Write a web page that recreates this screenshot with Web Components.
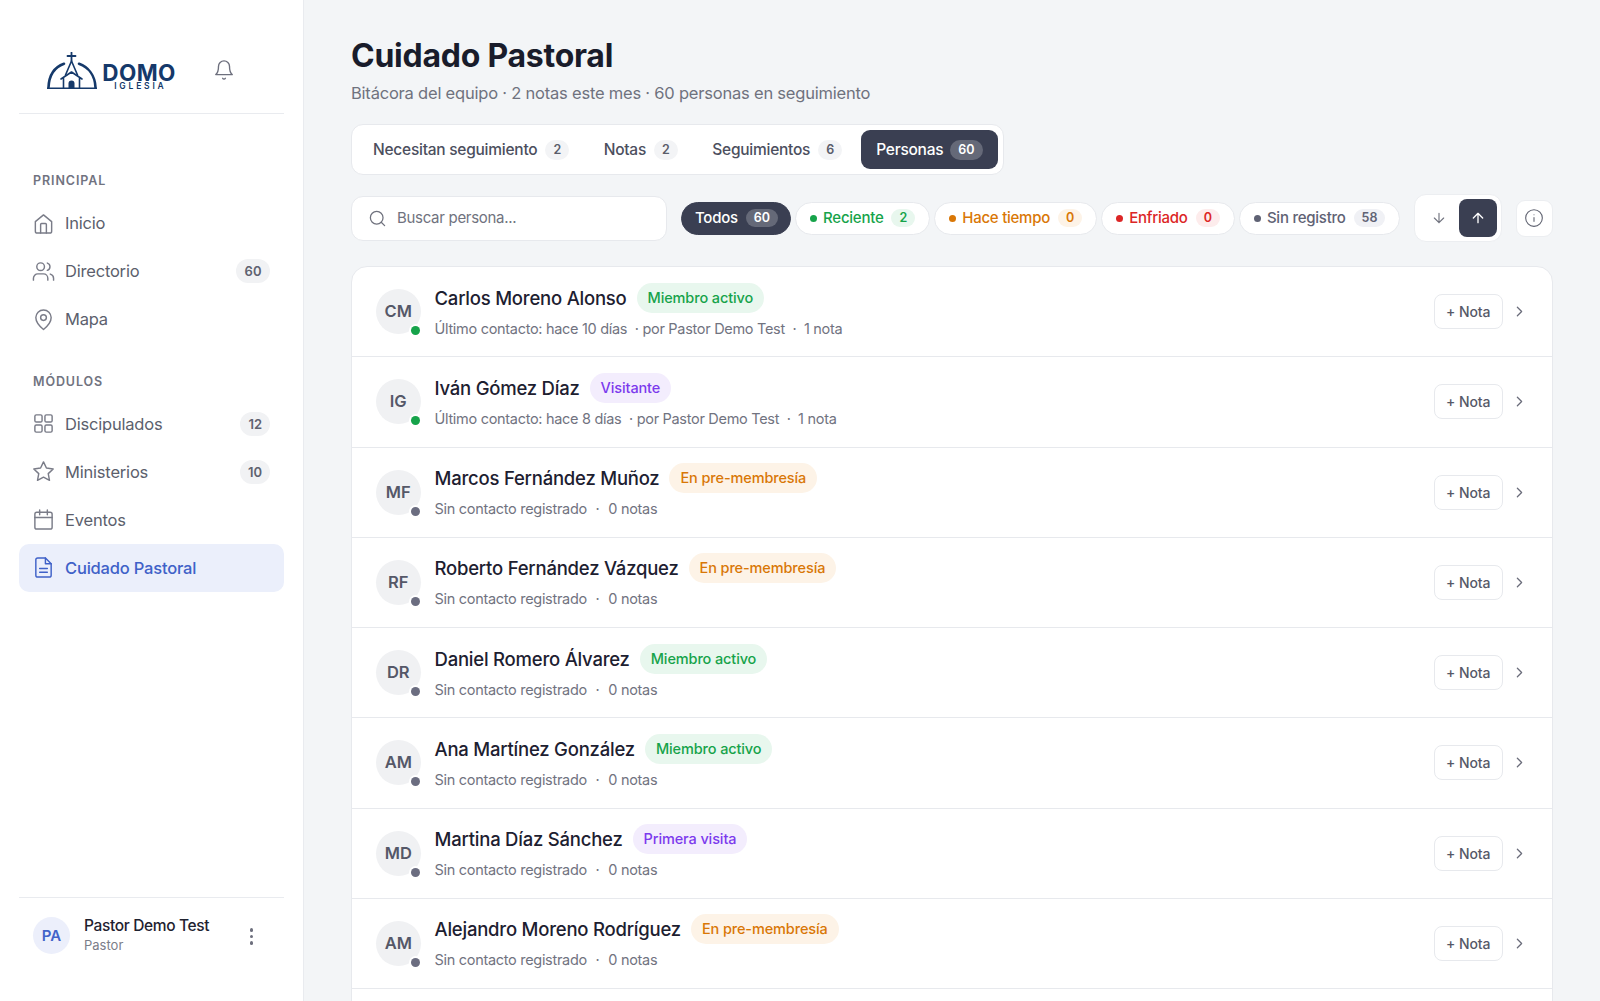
<!DOCTYPE html>
<html lang="es">
<head>
<meta charset="utf-8">
<title>Cuidado Pastoral</title>
<style>
  html, body { margin: 0; height: 100%; overflow: hidden; }
  body { font-family: Inter, "Liberation Sans", sans-serif; background: #f3f5f7; color: #1a1d2b; }
</style>
</head>
<body>
<app-shell>
  <side-bar slot="side">
    <nav-section title="PRINCIPAL">
      <nav-item icon="home">Inicio</nav-item>
      <nav-item icon="users" count="60">Directorio</nav-item>
      <nav-item icon="pin">Mapa</nav-item>
    </nav-section>
    <nav-section title="MÓDULOS">
      <nav-item icon="grid" count="12">Discipulados</nav-item>
      <nav-item icon="star" count="10">Ministerios</nav-item>
      <nav-item icon="calendar">Eventos</nav-item>
      <nav-item icon="file" active>Cuidado Pastoral</nav-item>
    </nav-section>
  </side-bar>

  <page-head>Bitácora del equipo · 2 notas este mes · 60 personas en seguimiento</page-head>

  <tab-bar>
    <tab-item count="2">Necesitan seguimiento</tab-item>
    <tab-item count="2">Notas</tab-item>
    <tab-item count="6">Seguimientos</tab-item>
    <tab-item count="60" active>Personas</tab-item>
  </tab-bar>

  <tool-bar>
    <search-box></search-box>
    <filter-pill count="60" active>Todos</filter-pill>
    <filter-pill count="2" tone="green">Reciente</filter-pill>
    <filter-pill count="0" tone="orange">Hace tiempo</filter-pill>
    <filter-pill count="0" tone="red">Enfriado</filter-pill>
    <filter-pill count="58" tone="gray">Sin registro</filter-pill>
    <sort-toggle></sort-toggle>
    <info-button></info-button>
  </tool-bar>

  <person-list>
    <person-row initials="CM" name="Carlos Moreno Alonso" badge="Miembro activo" tone="green" recent by="Último contacto: hace 10 días" notes="1 nota"></person-row>
    <person-row initials="IG" name="Iván Gómez Díaz" badge="Visitante" tone="purple" recent by="Último contacto: hace 8 días" notes="1 nota"></person-row>
    <person-row initials="MF" name="Marcos Fernández Muñoz" badge="En pre-membresía" tone="orange"></person-row>
    <person-row initials="RF" name="Roberto Fernández Vázquez" badge="En pre-membresía" tone="orange"></person-row>
    <person-row initials="DR" name="Daniel Romero Álvarez" badge="Miembro activo" tone="green"></person-row>
    <person-row initials="AM" name="Ana Martínez González" badge="Miembro activo" tone="green"></person-row>
    <person-row initials="MD" name="Martina Díaz Sánchez" badge="Primera visita" tone="purple"></person-row>
    <person-row initials="AM" name="Alejandro Moreno Rodríguez" badge="En pre-membresía" tone="orange"></person-row>
  </person-list>
</app-shell>

<script>
const ICONS = {
  home: '<path d="M3.5 10l8.5-7 8.5 7v10a2 2 0 0 1-2 2h-13a2 2 0 0 1-2-2z"/><path d="M9 22v-9a1 1 0 0 1 1-1h4a1 1 0 0 1 1 1v9"/>',
  users: '<circle cx="9" cy="7" r="4"/><path d="M1.5 21v-2a4.5 4.5 0 0 1 4.5-4.5h6a4.5 4.5 0 0 1 4.5 4.5v2"/><path d="M16 3.2a4 4 0 0 1 0 7.6"/><path d="M22.5 21v-2a4.5 4.5 0 0 0-3.4-4.3"/>',
  pin: '<path d="M20 10c0 6-8 12.5-8 12.5S4 16 4 10a8 8 0 0 1 16 0z"/><circle cx="12" cy="10" r="3"/>',
  grid: '<rect x="3" y="3" width="7.5" height="7.5" rx="1.5"/><rect x="13.5" y="3" width="7.5" height="7.5" rx="1.5"/><rect x="3" y="13.5" width="7.5" height="7.5" rx="1.5"/><rect x="13.5" y="13.5" width="7.5" height="7.5" rx="1.5"/>',
  star: '<path d="M12 2l3.05 6.4 7.05.95-5.15 4.85 1.3 7L12 17.85 5.75 21.2l1.3-7L1.9 9.35l7.05-.95z"/>',
  calendar: '<rect x="3" y="4.5" width="18" height="17.5" rx="2"/><path d="M8 2v5M16 2v5M3 10h18"/>',
  file: '<path d="M14 2H6a2 2 0 0 0-2 2v16a2 2 0 0 0 2 2h12a2 2 0 0 0 2-2V8z"/><path d="M14 2v6h6M8 13h8M8 17h8"/>',
  bell: '<path d="M6 8a6 6 0 0 1 12 0c0 7 3 9 3 9H3s3-2 3-9"/><path d="M10.5 21a1.7 1.7 0 0 0 3 0"/>',
  search: '<circle cx="11" cy="11" r="8"/><path d="M21 21l-4.3-4.3"/>',
  down: '<path d="M12 5v14M19 12l-7 7-7-7"/>',
  up: '<path d="M12 19V5M5 12l7-7 7 7"/>',
  info: '<circle cx="12" cy="12" r="10"/><path d="M12 16v-4.5M12 8h.01"/>',
  chevron: '<path d="M9 18l6-6-6-6"/>'
};

function svgIcon(name, size, width = 1.75) {
  return `<svg width="${size}" height="${size}" viewBox="0 0 24 24" fill="none" stroke="currentColor" stroke-width="${width}" stroke-linecap="round" stroke-linejoin="round">${ICONS[name]}</svg>`;
}

// small helper so each element only states its markup and styles
function define(tag, css, html) {
  customElements.define(tag, class extends HTMLElement {
    connectedCallback() {
      if (this.shadowRoot) return;
      this.attachShadow({ mode: 'open' });
      this.shadowRoot.innerHTML = `<style>${css}</style>${typeof html === 'function' ? html(this) : html}`;
    }
  });
}

define('app-shell', `
  :host { display: grid; grid-template-columns: 304px 1fr; height: 1001px; overflow: hidden; }
  main { padding: 36px 47px 0 47px; min-width: 0; overflow: hidden; }
`, `<slot name="side"></slot><main><slot></slot></main>`);

define('side-bar', `
  :host { display: flex; flex-direction: column; height: 1001px; box-sizing: border-box; padding: 0 19px; background: #fff; border-right: 1px solid #e9ebef; }
  header { height: 114px; flex: none; box-sizing: border-box; border-bottom: 1px solid #e9ebef; display: flex; align-items: flex-start; padding: 52px 0 0 28px; }
  .word { display: flex; flex-direction: column; align-items: center; margin: 12px 0 0 5px; color: #15396a; width: 74px; }
  .domo { font: 700 22.5px/17px Inter, sans-serif; letter-spacing: .4px; }
  .sub { font: 600 8.5px/9px Inter, sans-serif; letter-spacing: 2.8px; margin-top: 1px; margin-right: -2.8px; }
  .bell { margin: 7px 0 0 37px; color: #6d6f7d; line-height: 0; }
  .nav { flex: 1; }
  footer { height: 104px; flex: none; box-sizing: border-box; border-top: 1px solid #e9ebef; display: flex; align-items: flex-start; padding: 19px 30px 0 14px; }
  .av { width: 37px; height: 37px; border-radius: 50%; background: #eceffb; color: #4263c9; font: 600 15px/37px Inter, sans-serif; text-align: center; flex: none; }
  .who { margin-left: 14px; flex: 1; }
  .nm { font: 500 15.5px/20px Inter, sans-serif; color: #1f2230; letter-spacing: -.35px; margin-top: -1px; }
  .rl { font: 400 13px/18px Inter, sans-serif; color: #7b7d89; }
  .dots { display: flex; flex-direction: column; gap: 3px; margin: 11px 0 0 0; padding-right: 1px; }
  .dots i { width: 3.5px; height: 3.5px; border-radius: 50%; background: #6d6f7d; }
`, `
  <header>
    <svg width="50" height="38" viewBox="47 52 50 38" fill="none" stroke="#15396a" stroke-width="2" stroke-linecap="round" stroke-linejoin="round">
      <path d="M48.5 87.5C49 75 55 67 64 63.8M79 63.8C88 67 95 75 95.5 87.5" stroke-width="2.6"/>
      <path d="M47 88.2H97" stroke-width="1.6"/>
      <path d="M71.5 52.5V61M67.5 56H75.5" stroke-width="1.8"/>
      <path d="M71.5 61L65.5 75M71.5 61L77.5 75" stroke-width="1.6"/>
      <path d="M61 79L71.5 72L82 79M63.5 78.5V88M79.5 78.5V88" stroke-width="1.6"/>
      <path d="M68.5 88.5V83.5a3 3 0 0 1 6 0v5z" fill="#15396a" stroke="none"/>
    </svg>
    <div class="word"><span class="domo">DOMO</span><span class="sub">IGLESIA</span></div>
    <div class="bell">${svgIcon('bell', 22, 1.5)}</div>
  </header>
  <div class="nav"><slot></slot></div>
  <footer>
    <div class="av">PA</div>
    <div class="who"><div class="nm">Pastor Demo Test</div><div class="rl">Pastor</div></div>
    <div class="dots"><i></i><i></i><i></i></div>
  </footer>`);

define('nav-section', `
  :host { display: block; padding-top: 57px; }
  :host(:last-child) { padding-top: 29px; }
  .t { font: 600 12.5px/20px Inter, sans-serif; letter-spacing: .9px; color: #71737f; padding-left: 14px; margin-bottom: 8px; }
  :host(:last-child) .t { margin-bottom: 7.5px; }
`, el => `<div class="t">${el.getAttribute('title')}</div><slot></slot>`);

define('nav-item', `
  :host { display: flex; align-items: center; height: 48px; box-sizing: border-box; padding: 0 14px; border-radius: 10px; color: #5c5f6d; font: 400 16.5px/24px Inter, sans-serif; letter-spacing: -.2px; }
  :host([active]) { background: #ebeffb; color: #3f61c8; font-weight: 500; }
  .ic { width: 20px; height: 24px; display: flex; align-items: center; justify-content: center; margin-right: 12px; color: #7a7c88; }
  .ic svg { flex: none; }
  :host([active]) .ic { color: #3f61c8; }
  .lbl { flex: 1; }
  .n { font: 600 13px/24px Inter, sans-serif; color: #5f6270; background: #f1f2f4; border-radius: 12px; padding: 0 8.5px; text-align: center; letter-spacing: 0; }
  .n.narrow { padding: 0 8px; }
`, el => {
  const n = el.getAttribute('count');
  return `<span class="ic">${svgIcon(el.getAttribute('icon'), 23, 1.5)}</span><span class="lbl"><slot></slot></span>${n ? `<span class="n${n[0] === '1' ? ' narrow' : ''}">${n}</span>` : ''}`;
});

define('page-head', `
  :host { display: block; }
  h1 { margin: 0; font: 700 32px/40px Inter, sans-serif; letter-spacing: -.25px; color: #191c2b; }
  p { margin: 5px 0 0; font: 400 16.5px/24px Inter, sans-serif; color: #6f727e; letter-spacing: -.21px; }
`, `<h1>Cuidado Pastoral</h1><p><slot></slot></p>`);

define('tab-bar', `
  :host { display: inline-flex; gap: 2.5px; margin-top: 19px; padding: 5px; background: #fff; border: 1px solid #e7e9ed; border-radius: 12px; box-sizing: border-box; height: 51px; }
`, `<slot></slot>`);

define('tab-item', `
  :host { display: flex; align-items: center; gap: 8px; padding: 0 16px; height: 39px; border-radius: 9px; color: #4c4f5e; font: 500 15.5px/20px Inter, sans-serif; letter-spacing: -.25px; }
  :host([active]) { background: #3a3f52; color: #fff; gap: 7px; padding: 0 15.5px; }
  .n { font: 600 12.5px/20px Inter, sans-serif; background: #f3f4f6; color: #5a5d6b; border-radius: 10px; padding: 0 8px; letter-spacing: 0; }
  :host([active]) .n { background: rgba(255,255,255,.22); color: #fff; }
`, el => `<slot></slot><span class="n">${el.getAttribute('count')}</span>`);

define('tool-bar', `
  :host { display: flex; align-items: center; gap: 4px; margin-top: 19px; height: 48px; }
  ::slotted(*) { flex: none; }
`, `<slot></slot>`);

define('search-box', `
  :host { display: flex; align-items: center; width: 316px; height: 45px; box-sizing: border-box; padding-left: 16px; margin-right: 10px; background: #fff; border: 1px solid #e7e9ed; border-radius: 12px; color: #70727e; font: 400 15px/20px Inter, sans-serif; letter-spacing: -.3px; }
  svg { margin-right: 10px; color: #6f717d; }
`, `${svgIcon('search', 19, 1.6)}<span>Buscar persona...</span>`);

const PILL_TONES = {
  green: ['#16a34a', '#e8f7ee'],
  orange: ['#d97706', '#fdf3e7'],
  red: ['#dc2626', '#fdecec'],
  gray: ['#5f6274', '#f0f1f5']
};

define('filter-pill', `
  :host { display: flex; align-items: center; height: 33px; box-sizing: border-box; padding: 0 14px; background: #fff; border: 1px solid #e7e9ed; border-radius: 17px; font: 500 15px/20px Inter, sans-serif; letter-spacing: -.25px; white-space: nowrap; }
  :host([active]) { background: #3a3f52; border-color: #3a3f52; color: #fff; padding: 0 12px 0 13px; }
  i { width: 7px; height: 7px; border-radius: 50%; margin-right: 6px; background: currentColor; }
  .n { font: 600 12.5px/18px Inter, sans-serif; border-radius: 9px; padding: 0 8px; margin-left: 8px; letter-spacing: 0; }
`, el => {
  const tone = PILL_TONES[el.getAttribute('tone')];
  if (!tone) return `<slot></slot><span class="n" style="background:rgba(255,255,255,.22);color:#fff">${el.getAttribute('count')}</span>`;
  el.style.color = tone[0];
  return `<i></i><slot></slot><span class="n" style="background:${tone[1]}">${el.getAttribute('count')}</span>`;
});

define('sort-toggle', `
  :host { display: flex; width: 88px; height: 48px; box-sizing: border-box; padding: 4px; margin-left: 9.5px; background: #fff; border: 1px solid #eceef1; border-radius: 12px; }
  span { flex: 1; display: flex; align-items: center; justify-content: center; color: #70727e; border-radius: 8px; }
  span + span { flex: none; width: 38px; background: #3a3f52; color: #fff; }
`, `<span>${svgIcon('down', 16, 1.7)}</span><span>${svgIcon('up', 16, 2)}</span>`);

define('info-button', `
  :host { display: flex; align-items: center; justify-content: center; width: 37px; height: 37px; box-sizing: border-box; margin-left: 10px; background: #fff; border: 1px solid #eceef1; border-radius: 9px; color: #5f6270; }
`, svgIcon('info', 20, 1.3));

define('person-list', `
  :host { display: block; margin-top: 24px; min-height: 800px; background: #fff; border: 1px solid #e7e9ed; border-radius: 16px 16px 0 0; overflow: hidden; }
`, `<slot></slot>`);

const BADGE_TONES = {
  green: ['#16a34a', '#e8f7ee'],
  purple: ['#7c3aed', '#f3edfd'],
  orange: ['#d97706', '#fdf3e7']
};

define('person-row', `
  :host { display: flex; align-items: center; height: 90.25px; box-sizing: border-box; padding: 0 24.5px 0 24px; border-bottom: 1px solid #e7e9ed; }
  .av { position: relative; width: 44.5px; height: 45px; flex: none; border-radius: 50%; background: #f0f1f3; color: #555868; font: 600 16.5px/45px Inter, sans-serif; text-align: center; margin-right: 14px; }
  .st { position: absolute; right: 1px; bottom: -1px; width: 9px; height: 9px; border-radius: 50%; background: #6b6d80; box-shadow: 0 0 0 2px #fff; }
  .st.on { background: #16a34a; }
  .txt { flex: 1; min-width: 0; margin-top: -2px; }
  .l1 { display: flex; align-items: center; gap: 10px; height: 30px; }
  .nm { font: 500 18.5px/26px Inter, sans-serif; letter-spacing: -.22px; color: #1d2030; }
  .bd { font: 500 14.5px/30px Inter, sans-serif; letter-spacing: -.12px; padding: 0 11px; border-radius: 15px; }
  .l2 { display: flex; margin-top: 6px; font: 400 14.5px/20px Inter, sans-serif; letter-spacing: -.3px; color: #71737f; white-space: pre; }
  .sep { padding: 0 9px 0 8.5px; }
  .btn { font: 500 14px/33px Inter, sans-serif; letter-spacing: -.1px; width: 68.5px; height: 35px; box-sizing: border-box; text-align: center; border: 1px solid #e7e9ed; border-radius: 8px; color: #565968; background: #fff; }
  .chev { margin-left: 8px; color: #6b6d7b; line-height: 0; }
`, el => {
  const tone = BADGE_TONES[el.getAttribute('tone')];
  const by = el.getAttribute('by');
  const notes = el.getAttribute('notes');
  const meta = by
    ? `<span>${by}  · por Pastor Demo Test  ·  ${notes}</span>`
    : '<span>Sin contacto registrado</span><span class="sep">·</span><span>0 notas</span>';
  return `
    <div class="av">${el.getAttribute('initials')}<span class="st${el.hasAttribute('recent') ? ' on' : ''}"></span></div>
    <div class="txt">
      <div class="l1"><span class="nm">${el.getAttribute('name')}</span><span class="bd" style="color:${tone[0]};background:${tone[1]}">${el.getAttribute('badge')}</span></div>
      <div class="l2">${meta}</div>
    </div>
    <div class="btn">+ Nota</div>
    <div class="chev">${svgIcon('chevron', 17, 1.8)}</div>`;
});
</script>
</body>
</html>
